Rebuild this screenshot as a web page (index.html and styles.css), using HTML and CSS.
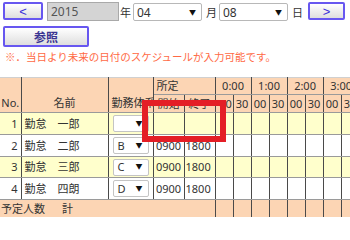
FILE: index.html
```html
<!DOCTYPE html>
<html lang="ja">
<head>
<meta charset="utf-8">
<title>スケジュール</title>
<link rel="stylesheet" href="styles.css">
</head>
<body>
<div class="page">
  <div class="toolbar">
    <button class="btn prev">&lt;</button>
    <input class="year" type="text" value="2015" readonly>
    <span class="unit">年</span>
    <div class="select"><span class="val">04</span><span class="arrow">▼</span></div>
    <span class="unit">月</span>
    <div class="select"><span class="val">08</span><span class="arrow">▼</span></div>
    <span class="unit">日</span>
    <button class="btn next">&gt;</button>
  </div>
  <div class="btnrow">
    <button class="btn ref">参照</button>
  </div>
  <p class="note">※．当日より未来の日付のスケジュールが入力可能です。</p>
  <div class="grid">
    <table class="sched">
      <colgroup>
        <col class="c-no"><col class="c-name"><col class="c-type"><col class="c-time"><col class="c-time">
        <col class="c-half"><col class="c-half"><col class="c-half"><col class="c-half">
        <col class="c-half"><col class="c-half"><col class="c-half"><col class="c-half">
      </colgroup>
      <thead>
        <tr class="h1">
          <th rowspan="2" class="hd b no-l">No.</th>
          <th rowspan="2" class="hd b">名前</th>
          <th rowspan="2" class="hd b">勤務体系</th>
          <th colspan="2" class="hd left">所定</th>
          <th colspan="2" class="hd">0:00</th>
          <th colspan="2" class="hd">1:00</th>
          <th colspan="2" class="hd">2:00</th>
          <th colspan="2" class="hd">3:00</th>
        </tr>
        <tr class="h2">
          <th class="hd">開始</th><th class="hd">終了</th>
          <th class="hd">00</th><th class="hd">30</th>
          <th class="hd">00</th><th class="hd">30</th>
          <th class="hd">00</th><th class="hd">30</th>
          <th class="hd">00</th><th class="hd">30</th>
        </tr>
      </thead>
      <tbody>
        <tr class="odd r1">
          <td class="num no-l">1</td><td class="name">勤怠　一郎</td>
          <td class="type"><div class="cell-sel"><span class="val"></span><span class="arrow">▼</span></div></td>
          <td class="t"></td><td class="t"></td>
          <td></td><td></td><td></td><td></td><td></td><td></td><td></td><td></td>
        </tr>
        <tr class="r2">
          <td class="num no-l">2</td><td class="name">勤怠　二郎</td>
          <td class="type"><div class="cell-sel"><span class="val">B</span><span class="arrow">▼</span></div></td>
          <td class="t">0900</td><td class="t">1800</td>
          <td></td><td></td><td></td><td></td><td></td><td></td><td></td><td></td>
        </tr>
        <tr class="odd r3">
          <td class="num no-l">3</td><td class="name">勤怠　三郎</td>
          <td class="type"><div class="cell-sel"><span class="val">C</span><span class="arrow">▼</span></div></td>
          <td class="t">0900</td><td class="t">1800</td>
          <td></td><td></td><td></td><td></td><td></td><td></td><td></td><td></td>
        </tr>
        <tr class="r4">
          <td class="num no-l">4</td><td class="name">勤怠　四朗</td>
          <td class="type"><div class="cell-sel"><span class="val">D</span><span class="arrow">▼</span></div></td>
          <td class="t">0900</td><td class="t">1800</td>
          <td></td><td></td><td></td><td></td><td></td><td></td><td></td><td></td>
        </tr>
      </tbody>
      <tfoot>
        <tr class="ft">
          <td colspan="5" class="hd foot no-l">予定人数<span class="sum">計</span></td>
          <td class="hd"></td><td class="hd"></td><td class="hd"></td><td class="hd"></td>
          <td class="hd"></td><td class="hd"></td><td class="hd"></td><td class="hd"></td>
        </tr>
      </tfoot>
    </table>
  </div>
  <div class="mark"></div>
</div>
</body>
</html>
```
FILE: styles.css
```css
html, body {
  margin: 0;
  padding: 0;
  background: #fff;
  overflow: hidden;
}
body {
  width: 350px;
  height: 217px;
  font-family: "Noto Sans", "Noto Sans CJK JP", sans-serif;
  color: #333;
}
.page {
  position: relative;
  width: 350px;
  height: 217px;
  overflow: hidden;
}

/* toolbar */
.toolbar {
  display: flex;
  align-items: center;
  height: 19px;
  padding: 2px 0 0 3px;
}
.btn {
  box-sizing: border-box;
  margin: 0;
  padding: 0;
  border: 2px solid #6757f0;
  border-radius: 2px;
  background: linear-gradient(#ffffff, #dedede);
  color: #3b30d8;
  font-family: "Liberation Sans", "Noto Sans CJK JP", sans-serif;
  font-size: 13px;
  line-height: 1;
  cursor: pointer;
}
.prev {
  width: 40px;
  height: 18px;
  align-self: flex-start;
}
.next {
  width: 37px;
  height: 18px;
  margin-left: 3px;
  align-self: flex-start;
}
.year {
  box-sizing: border-box;
  width: 72px;
  height: 19px;
  margin: 0 1px 0 4px;
  padding: 0 0 0 3px;
  border: 1px solid #a9a9a9;
  background: #d4d4d4;
  color: #555;
  font-family: "Noto Sans", sans-serif;
  font-size: 12px;
  outline: none;
}
.unit {
  width: 11px;
  margin-right: 2px;
  font-family: "Noto Sans CJK JP", sans-serif;
  font-size: 11px;
  color: #333;
  text-align: center;
}
.unit + .btn { margin-left: 3px; }
.select + .unit { margin-left: 4px; }
.select {
  box-sizing: border-box;
  position: relative;
  display: flex;
  align-items: center;
  width: 69px;
  height: 18px;
  margin-top: 1px;
  padding-left: 3px;
  border: 1px solid #b8b8b8;
  border-radius: 2px;
  background: #fff;
  font-size: 12px;
  color: #333;
}
.select .arrow {
  margin-left: auto;
  margin-right: 5px;
  font-size: 7px;
  color: #111;
}

.btnrow {
  display: flex;
  margin-top: 5px;
  padding-left: 3px;
}
.ref {
  width: 86px;
  height: 21px;
  font-family: "Noto Sans CJK JP", sans-serif;
  font-weight: bold;
  font-size: 12px;
  color: #3b3592;
}

.note {
  margin: 3px 0 0 0;
  padding-left: 5px;
  height: 14px;
  line-height: 14px;
  font-family: "Noto Sans CJK JP", sans-serif;
  font-size: 10.5px;
  color: #ff6a45;
  white-space: nowrap;
}

/* table */
.grid {
  margin-top: 13px;
  width: 350px;
  overflow: hidden;
}
.sched {
  border-collapse: collapse;
  table-layout: fixed;
  width: 359px;
  font-size: 11px;
  color: #333;
}
.c-no { width: 21px; }
.c-name { width: 87px; }
.c-type { width: 45px; }
.c-time { width: 31px; }
.c-half { width: 18px; }

.sched th, .sched td {
  padding: 0;
  border-left: 1px solid #4a4a4a;
  border-right: 1px solid #4a4a4a;
  border-top: 1px solid #9a9a9a;
  border-bottom: 1px solid #9a9a9a;
  overflow: hidden;
  white-space: nowrap;
  font-weight: normal;
  text-align: center;
  vertical-align: middle;
  line-height: 14px;
}
.sched thead tr.h1 th { border-top-color: #d0d0d0; }
.sched .no-l { border-left: none; }
.hd { background: #fcd5b4; }
.sched th.b {
  vertical-align: bottom;
  padding-bottom: 2px;
}
.sched th.left {
  text-align: left;
  padding-left: 3px;
}
.sched th:nth-child(3) { padding-left: 3px; padding-right: 0; }
.h1 { height: 17px; }
.h2 { height: 18px; }
.r1, .r2, .r4 { height: 22px; }
.r3 { height: 21px; }
.ft { height: 18px; }

.odd td { background: #ffffcc; }
.sched td.num {
  text-align: right;
  padding-right: 3px;
}
.sched td.name {
  text-align: left;
  padding-left: 3px;
}
.sched td.t { text-align: center; }
.sched td.t + td.t { text-align: left; padding-left: 1px; }

.cell-sel {
  box-sizing: border-box;
  display: flex;
  align-items: center;
  width: 36px;
  height: 17px;
  margin: 0 auto;
  padding-left: 4px;
  border: 1px solid #c4c4c4;
  border-radius: 2px;
  background: #fff;
  font-size: 11px;
  color: #333;
}
.cell-sel .arrow {
  margin-left: auto;
  margin-right: 5px;
  font-size: 7px;
  color: #111;
}

.sched td.foot {
  text-align: left;
  padding-left: 1px;
}
.sum { margin-left: 17px; }

/* annotation overlay */
.mark {
  position: absolute;
  left: 142px;
  top: 100px;
  width: 84px;
  height: 42px;
  box-sizing: border-box;
  border: 6px solid #e41e26;
  pointer-events: none;
}
```
